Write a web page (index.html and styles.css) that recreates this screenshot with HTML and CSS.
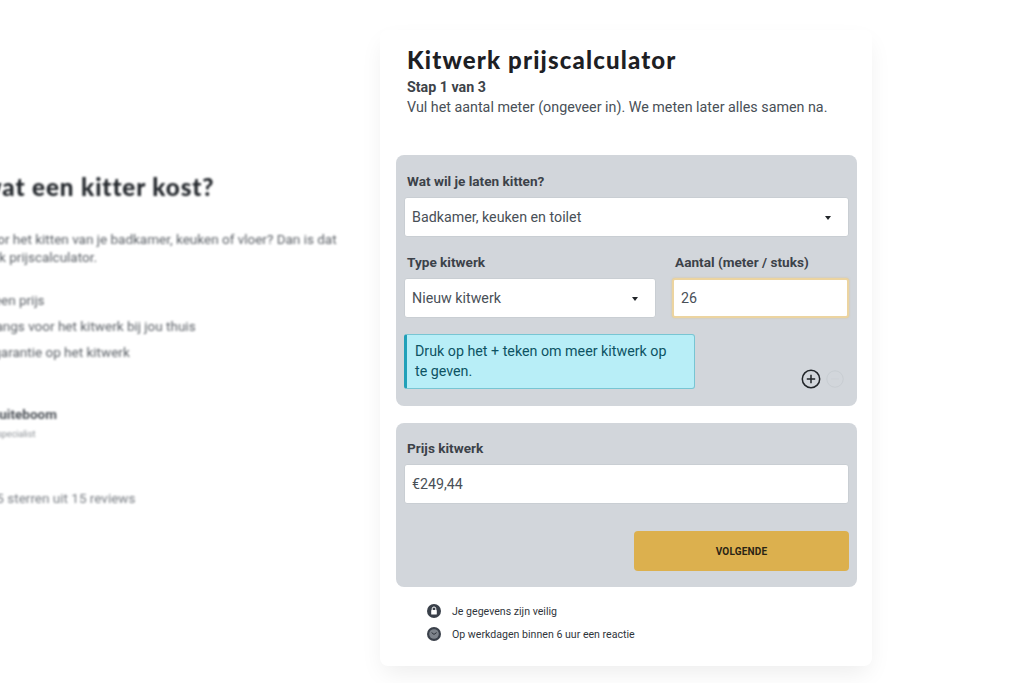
FILE: index.html
```html
<!DOCTYPE html>
<html lang="nl">
<head>
<meta charset="utf-8">
<title>Kitwerk prijscalculator</title>
<link rel="stylesheet" href="styles.css">
</head>
<body>
<div class="page">
  <section class="intro">
    <h2 class="intro-title">Wil je weten wat een kitter kost?</h2>
    <p class="intro-text">Benieuwd naar de kosten voor het kitten van je badkamer, keuken of vloer? Dan is dat<br>gemakkelijk met onze kitwerk prijscalculator.</p>
    <ul class="intro-list">
      <li>Krijg direct een prijs</li>
      <li>Wij komen langs voor het kitwerk bij jou thuis</li>
      <li>Tot 10 jaar garantie op het kitwerk</li>
    </ul>
    <div class="person">
      <div class="person-name">Jan Buiteboom</div>
      <div class="person-role">Kitwerk specialist</div>
    </div>
    <div class="rating">Gemiddeld 4,5 sterren uit 15 reviews</div>
  </section>
  <main class="card">
    <h1 class="title">Kitwerk prijscalculator</h1>
    <div class="step">Stap 1 van 3</div>
    <p class="lead">Vul het aantal meter (ongeveer in). We meten later alles samen na.</p>
    <section class="panel panel-top">
      <div class="label label-first">Wat wil je laten kitten?</div>
      <div class="control select"><span>Badkamer, keuken en toilet</span><i class="caret"></i></div>
      <div class="row">
        <div class="col-type">
          <div class="label">Type kitwerk</div>
          <div class="control select"><span>Nieuw kitwerk</span><i class="caret"></i></div>
        </div>
        <div class="col-qty">
          <div class="label">Aantal (meter / stuks)</div>
          <div class="control focus"><span>26</span></div>
        </div>
      </div>
      <div class="row-bottom">
        <div class="alert">Druk op het + teken om meer kitwerk op te geven.</div>
        <div class="actions">
          <svg class="plus" viewBox="0 0 20 20" width="20" height="20"><circle cx="10" cy="10" r="8.7" fill="none" stroke="#212529" stroke-width="1.5"/><path d="M10 5.8v8.4M5.8 10h8.4" stroke="#212529" stroke-width="1.5" fill="none"/></svg>
          <svg class="minus" viewBox="0 0 18 18" width="18" height="18"><circle cx="9" cy="9" r="8.2" fill="none" stroke="#c8cdd2" stroke-width="1"/><path d="M5 9h8" stroke="#cdd1d6" stroke-width="1"/></svg>
        </div>
      </div>
    </section>
    <section class="panel panel-price">
      <div class="label label-first">Prijs kitwerk</div>
      <div class="control"><span>€249,44</span></div>
      <div class="submit-row"><button class="btn" type="button">VOLGENDE</button></div>
    </section>
    <ul class="notes">
      <li>
        <svg viewBox="0 0 14 14" width="14" height="14"><circle cx="7" cy="7" r="7" fill="#3a404a"/><rect x="4.2" y="6" width="5.6" height="4.6" rx=".6" fill="#fff"/><path d="M5.2 6V4.8a1.8 1.8 0 0 1 3.6 0V6" fill="none" stroke="#fff" stroke-width="1"/></svg>
        <span>Je gegevens zijn veilig</span>
      </li>
      <li>
        <svg viewBox="0 0 14 14" width="14" height="14"><circle cx="7" cy="7" r="7" fill="#3a404a"/><circle cx="7" cy="7" r="4.8" fill="#7d838b"/><path d="M4.6 5.6 7 7.4l2.6-1.8" fill="none" stroke="#2d323a" stroke-width="1"/></svg>
        <span>Op werkdagen binnen 6 uur een reactie</span>
      </li>
    </ul>
  </main>
</div>
</body>
</html>
```
FILE: styles.css
```css
* { box-sizing: border-box; }
html, body { margin: 0; padding: 0; background: #fff; }
body { font-family: Roboto, "Liberation Sans", sans-serif; color: #343a40; }
.page { display: flex; width: 1024px; height: 683px; overflow: hidden; align-items: flex-start; }

.intro { flex: none; width: 523px; margin-left: -171px; margin-right: 28px; padding-top: 171px; filter: blur(1.1px); color: #5d6268; font-size: 13.5px; }
.intro-title { margin: 0 0 27px; font-family: Lato, sans-serif; font-weight: 900; font-size: 24.2px; line-height: 32px; letter-spacing: .9px; color: #22262b; white-space: nowrap; }
.intro-text { margin: 0 0 21px; line-height: 18px; white-space: nowrap; }
.intro-list { list-style: none; margin: 0 0 39px; padding: 0 0 0 97px; }
.intro-list li { line-height: 26px; white-space: nowrap; }
.person { padding-left: 136px; }
.person-name { font-weight: 700; line-height: 20px; color: #4c5157; white-space: nowrap; }
.person-role { font-size: 9px; line-height: 20px; color: #8a8f94; white-space: nowrap; }
.rating { margin-top: 44px; padding-left: 89px; line-height: 20px; color: #777c82; white-space: nowrap; }

.card { flex: none; width: 492px; height: 636px; margin-top: 30px; padding: 14px 15px 0 16px; background: #fff; border-radius: 8px; box-shadow: 0 10px 25px -4px rgba(0,0,0,.08), 0 0 22px rgba(0,0,0,.008); }
.title { margin: 0 0 0 11px; font-family: Lato, sans-serif; font-weight: 900; font-size: 24px; line-height: 32px; letter-spacing: 1.15px; color: #1d2024; }
.step { margin: 1px 0 0 11px; font-size: 14.25px; font-weight: 700; line-height: 20px; color: #3d4349; }
.lead { margin: 0 0 38px 11px; font-size: 14.3px; line-height: 20px; color: #495057; white-space: nowrap; }

.panel { background: #d2d6db; border-radius: 8px; padding: 0 8px; }
.panel-top { height: 251px; }
.panel-price { height: 164px; margin-top: 17px; }
.label { font-size: 13.6px; font-weight: 700; line-height: 20px; color: #3c4249; padding: 0 3px; margin-bottom: 6px; }
.label-first { padding-top: 16px; margin-bottom: 6px; box-sizing: content-box; }
.panel-price .label-first { padding-top: 15px; }
.control { height: 40px; background: #fff; border: 1px solid #c9ced3; border-radius: 3px; padding: 0 7px; display: flex; align-items: center; justify-content: space-between; font-size: 14.25px; color: #495057; }
.select { padding-right: 17px; }
.caret { width: 0; height: 0; border-left: 3.5px solid transparent; border-right: 3.5px solid transparent; border-top: 4px solid #212529; margin-top: 2px; }
.focus { border: 2px solid #ecd4a0; padding-left: 7px; box-shadow: 0 0 2px rgba(220,176,78,.5); }

.row { display: flex; gap: 16px; margin-top: 15px; }
.col-type { width: 252px; }
.col-qty { width: 177px; }
.row-bottom { display: flex; justify-content: space-between; align-items: flex-end; margin-top: 16px; }
.alert { width: 291px; height: 55px; padding: 6px 20px 0 8px; background: #b8eef7; border: 1px solid #78c5d3; border-left: 3px solid #21a0b8; border-radius: 3px; font-size: 14.25px; line-height: 20px; color: #0d5363; }
.actions { display: flex; align-items: center; gap: 5px; padding-right: 5px; }
.plus, .minus { display: block; }

.submit-row { display: flex; justify-content: flex-end; margin-top: 27px; }
.btn { width: 215px; height: 40px; border: 0; border-radius: 4px; background: #dcb04e; color: #2a2415; font-family: Roboto, sans-serif; font-size: 10px; font-weight: 700; letter-spacing: .2px; }

.notes { list-style: none; margin: 13px 0 0 31px; padding: 0; font-size: 10.6px; color: #30353b; }
.notes li { display: flex; align-items: center; gap: 11px; height: 23px; }
.notes svg { flex: none; display: block; margin-top: -2px; }
```
